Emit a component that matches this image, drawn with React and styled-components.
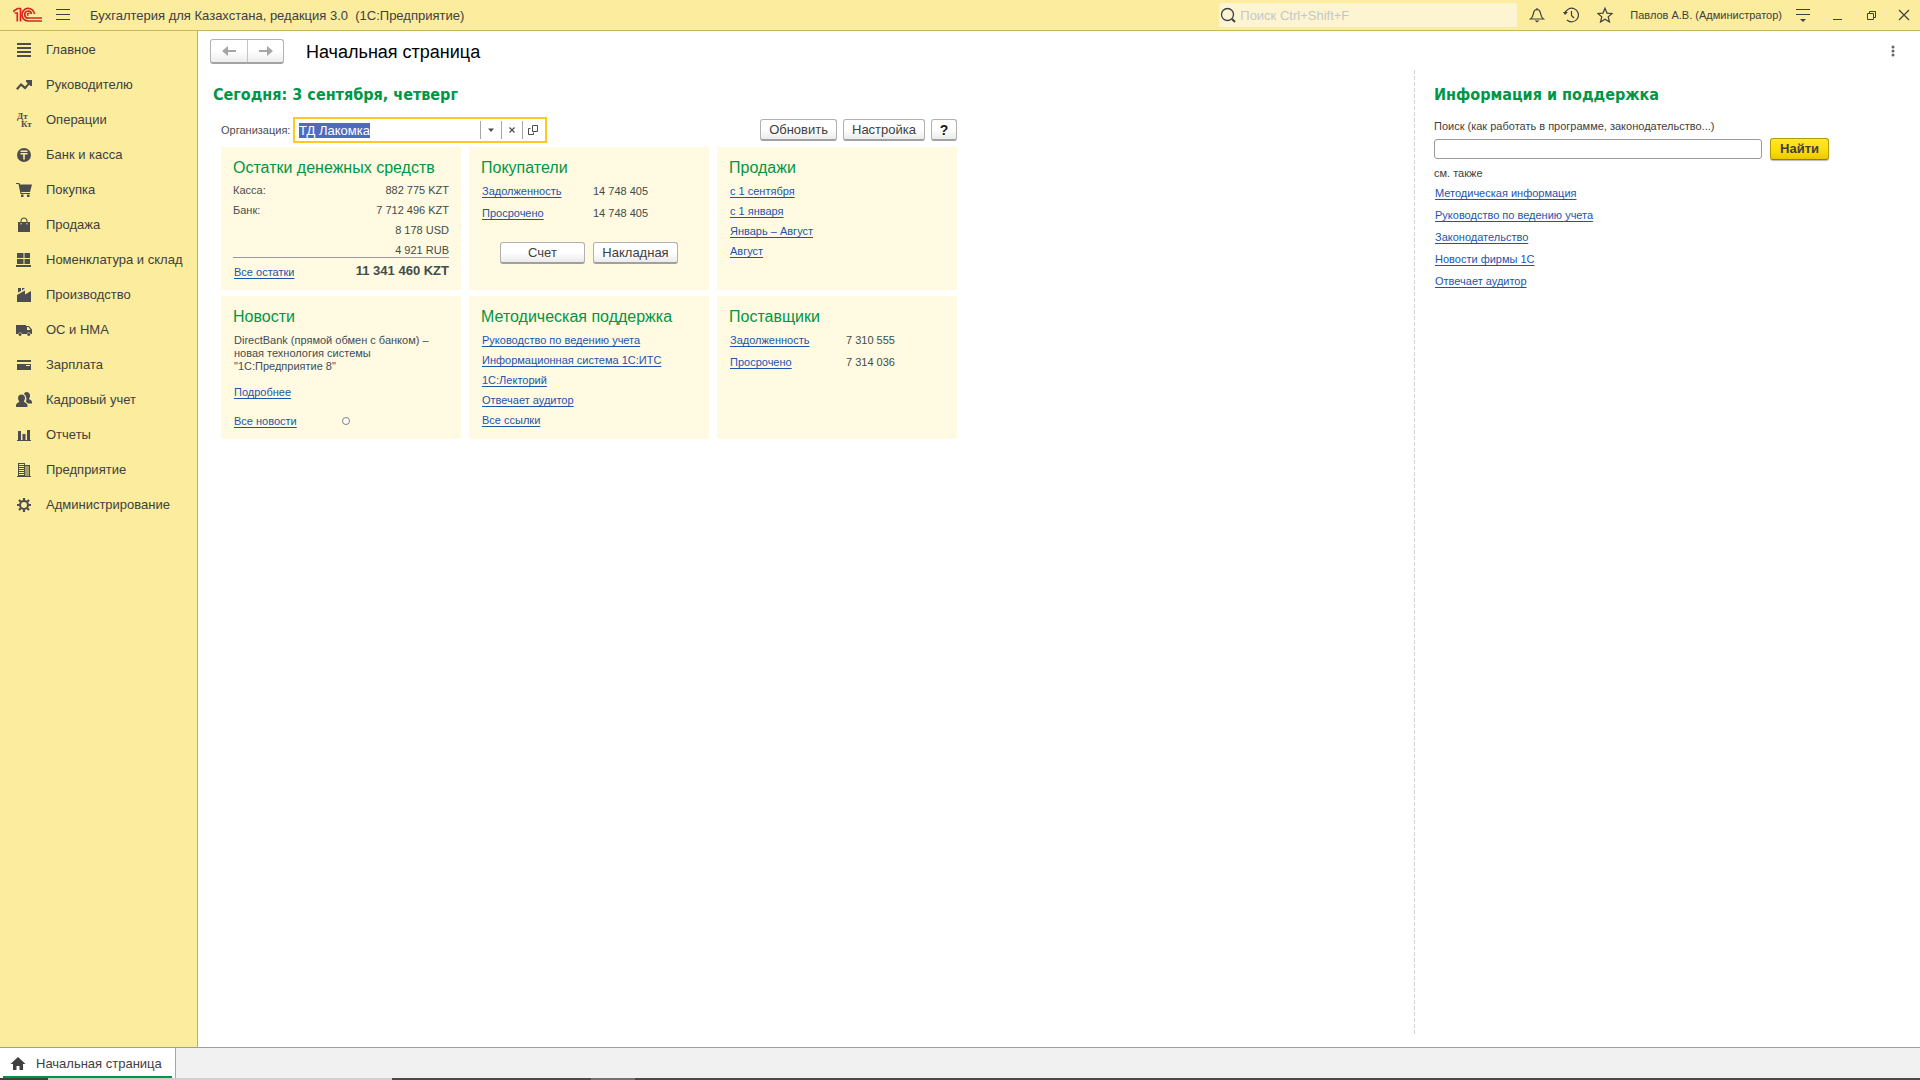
import { useEffect, useRef } from "react";
import styled, { createGlobalStyle } from "styled-components";

const GlobalStyle = createGlobalStyle`
    * { box-sizing: border-box; }
    body {
        margin: 0; background: #fff; color: #404040;
        font-family: "Liberation Sans", Arial, sans-serif; font-size: 13px;
    }
    button, input { font-family: inherit; }
`;

const Page = styled.div`
    min-height: 100vh;
    display: flex; flex-direction: column;
`;

/* верхняя панель */
const TopBar = styled.header`
    display: flex; align-items: center;
    height: 31px; padding-left: 13px;
    background: #fbec9e; border-bottom: 1px solid #c6b75f;
`;

const AppTitle = styled.span`
    flex: 1; margin-left: 7px;
    font-size: 13px; white-space: pre;
`;

const SearchBox = styled.label`
    display: flex; align-items: center; gap: 4px;
    width: 298px; height: 24px; padding-left: 1px; margin-right: 3px;
    background: #fdf5d2; border-radius: 2px;
`;

const SearchInput = styled.input`
    flex: 1; min-width: 0; padding: 0;
    border: none; outline: none; background: none; font-size: 13px;
    &::placeholder { color: #c6c6c6; opacity: 1; }
`;

const IconBtn = styled.button`
    display: flex; align-items: center; justify-content: center;
    width: ${(p) => p.$w || 34}px; height: 24px; padding: 0;
    border: none; background: none; color: #404040; cursor: pointer;
`;

const UserName = styled.span`
    margin: 0 4px 0 8px; font-size: 11px; white-space: nowrap;
`;

/* разделы */
const Body = styled.div`
    flex: 1; display: flex;
`;

const Sidebar = styled.nav`
    width: 198px; padding-top: 1px; flex-shrink: 0;
    background: #fbec9e; border-right: 1px solid #bfb061;
`;

const SideLink = styled.a`
    display: flex; align-items: center; gap: 14px;
    height: 35px; padding-left: 16px;
    color: #404040; text-decoration: none; font-size: 13px; white-space: nowrap;
    svg { color: #4d4d4d; }
    &:hover { background: #f7e27c; }
`;

const Content = styled.main`
    flex: 1; min-width: 0;
    display: flex; flex-direction: column;
`;

const PageHead = styled.div`
    display: flex; align-items: center;
    height: 39px; padding: 1px 17px 0 12px;
`;

const NavGroup = styled.div`
    display: flex; height: 25px; margin-right: 22px;
    border: 1px solid #b3b3b3; border-bottom: 2px solid #a3a3a3; border-radius: 3px;
    background: linear-gradient(#fff 50%, #ececec);
    button + button { border-left: 1px solid #c4c4c4; }
`;

const NavBtn = styled.button`
    display: flex; align-items: center; justify-content: center;
    width: 36px; padding: 0; border: none; background: none; color: #a6a6a6;
`;

const PageTitle = styled.h1`
    flex: 1; margin: 0; padding-top: 2px;
    font-size: 18px; font-weight: normal; color: #000;
`;

const Columns = styled.div`
    flex: 1; display: grid; grid-template-columns: 1fr 506px;
    padding-bottom: 12px;
`;

const Desktop = styled.section`
    padding: 15px 15px 0;
`;

const Support = styled.section`
    padding: 15px 20px 0;
    background: repeating-linear-gradient(#d4d4d4 0 4px, transparent 4px 6px) 0 0 / 1px 100% no-repeat;
`;

const Heading = styled.h2`
    margin: 0; line-height: 20px;
    font-family: "DejaVu Sans Condensed", "DejaVu Sans", sans-serif;
    font-size: 16px; font-weight: bold; color: #009646;
`;

const Board = styled.div`
    width: 736px; margin: 12px 0 0 8px;
`;

const OrgRow = styled.div`
    display: flex; align-items: center; gap: 6px; margin-bottom: 4px;
`;

const OrgLabel = styled.label`
    width: 66px; font-size: 11px; white-space: nowrap; color: #4d4d4d;
`;

const Combo = styled.div`
    display: flex; align-items: center;
    width: 254px; height: 26px; margin-right: auto; padding: 0 2px 0 4px;
    border: 2px solid #fdca1f; background: #fff;
`;

const ComboInput = styled.input`
    flex: 1; min-width: 0; padding: 0;
    border: none; outline: none; font-size: 13px;
    &::selection { background: #4f6bc0; color: #fff; }
`;

const ComboBtn = styled.button`
    display: flex; align-items: center; justify-content: center;
    width: 21px; height: 18px; padding: 0; color: #4d4d4d;
    border: none; border-left: 1px solid #a6a6a6; background: none;
`;

const Button = styled.button`
    height: 22px; padding: 0 8px; min-width: ${(p) => p.$min || 26}px;
    border: 1px solid #b0b0b0; border-bottom: 2px solid #a0a0a0; border-radius: 3px;
    background: linear-gradient(#fff 50%, #ebebeb);
    color: #404040; font-size: 13px; line-height: 18px; white-space: nowrap;
`;

const HelpBtn = styled(Button)`
    padding: 0; font-weight: bold; color: #1a1a1a; font-size: 14px;
`;

const FindBtn = styled(Button)`
    min-width: 59px;
    border-color: #b59b00; border-bottom: 1px solid #94800a;
    background: linear-gradient(#ffe733, #ffdd00 60%, #ebc800);
    box-shadow: 0 1px 1px #bbb; font-weight: bold;
`;

const Cards = styled.div`
    display: grid; grid-template-columns: repeat(3, 1fr); gap: 6px 8px;
`;

const Card = styled.article`
    min-height: 143px; padding: 11px 12px 0;
    background: #fffae1; font-size: 11px; color: #404d4d;
`;

const CardTitle = styled.h3`
    margin: 0 0 2px; line-height: 20px;
    font-size: 16px; font-weight: normal; color: #009646; white-space: nowrap;
`;

const Link = styled.a`
    color: #1c55ae; font-size: 11px; white-space: nowrap;
    text-decoration: underline; text-underline-offset: 2px;
`;

const List = styled.ul`
    margin: 0; padding: 1px 0 0 1px; list-style: none;
    li { height: ${(p) => p.$row || 20}px; line-height: 20px; }
`;

const Money = styled.table`
    width: 100%; margin-top: 5px; border-collapse: separate; border-spacing: 0;
    th, td { padding: 0; line-height: 14px; }
    th { text-align: left; font-weight: normal; color: #4d4d4d; }
    td { text-align: right; }
    tbody tr { height: 20px; vertical-align: top; }
    tbody tr:last-child { height: 14px; }
    tfoot th, tfoot td { height: 28px; border-top: 1px solid #999; }
    tfoot th { padding-left: 1px; }
    tfoot td { padding-bottom: 2px; font-weight: bold; font-size: 13px; }
`;

const Debts = styled.table`
    border-collapse: collapse;
    th, td { height: 22px; padding: 0 0 0 1px; text-align: left; font-weight: normal; }
    th { width: ${(p) => p.$name}px; }
`;

const CardActions = styled.div`
    display: flex; justify-content: center; gap: 8px; margin-top: 18px;
`;

const NewsText = styled.p`
    margin: 0; padding: 5px 0 0 1px; line-height: 13px; color: #404d5a;
`;

const NewsFoot = styled.div`
    display: flex; align-items: center; gap: 45px;
    height: 20px; margin: 9px 0 0 1px;
`;

const Dot = styled.input`
    appearance: none; width: 8px; height: 8px; margin: 0;
    border: 1px solid #808080; border-radius: 50%; background: #fff;
`;

const SupportLabel = styled.label`
    display: block; margin-top: 12px; font-size: 11px; line-height: 18px;
`;

const FindRow = styled.div`
    display: flex; align-items: center; gap: 8px; margin-top: 3px;
`;

const FindInput = styled.input`
    width: 328px; height: 20px; padding: 0 5px;
    border: 1px solid #999; border-radius: 3px; font-size: 12px;
`;

const SeeAlso = styled.p`
    margin: 4px 0 0; font-size: 11px; line-height: 18px;
`;

/* открытые окна */
const Tabs = styled.footer`
    display: flex; height: 31px;
    border-top: 1px solid #9d9d9d; background: #f1f1f1;
`;

const Tab = styled.a`
    display: flex; align-items: center; gap: 10px;
    width: 176px; padding: 0 12px 0 10px;
    border-right: 1px solid #a6a6a6; color: #404040; text-decoration: none; white-space: nowrap;
    background: linear-gradient(#009646, #009646) 3px 100% / 169px 2px no-repeat #fff;
`;

const TaskStrip = styled.div`
    display: flex; height: 2px; background: #484a4c;
`;

const TaskPart = styled.span`
    width: ${(p) => p.$w}px; background: ${(p) => p.$color};
`;

function Icon({ size = 16, children, stroke }) {
    return (
        <svg width={size} height={size} viewBox={`0 0 ${size} ${size}`} aria-hidden="true"
            fill={stroke ? "none" : "currentColor"} stroke={stroke ? "currentColor" : "none"} strokeWidth={stroke}>
            {children}
        </svg>
    );
}

const sections = [
    ["Главное", <path d="M1 1h14v2H1zM1 5h14v2H1zM1 9h14v2H1zM1 13h14v2H1z" />],
    ["Руководителю", <path d="M0 11.5 5 6l4 3.500 2.700-3L10 4.500V3h6v6h-1.500l-1.300-1.200L9.200 12.500 5 9 1.800 13z" />],
    ["Операции", (
        <g fontFamily="Liberation Serif, serif" fontSize="9" fontWeight="bold">
            <text x="1" y="7">Дт</text>
            <text x="5" y="15">Кт</text>
        </g>
    )],
    ["Банк и касса", <path fillRule="evenodd" d="M8 1a7 7 0 1 0 0 14A7 7 0 0 0 8 1zM4.500 3.500h7V5h-7zM4.500 6h7v1.500H8.800V12.500H7.200V7.500H4.500z" />],
    ["Покупка", <path d="M0 1h3.500l.5 1.500h12L14 10H5.300l.2 1H14v1H4.500L2.500 2H0zM5 12.500h2.500V15H5zM11 12.500h2.500V15H11z" />],
    ["Продажа", <path fillRule="evenodd" d="M2 5h2.500V4c0-2 1.500-3.500 3.500-3.500s3.500 1.500 3.500 3.500v1H14v10H2zM5.600 5h4.800V4c0-1.400-1-2.400-2.400-2.400S5.600 2.600 5.600 4zM4.500 6v1.500h1V6zM10.500 6v1.500h1V6z" />],
    ["Номенклатура и склад", <path d="M1 1h6.500v5H1zM8.500 1H14v5H8.500zM1 7h6.500v5H1zM8.500 7H14v5H8.500zM0 13h15v2H0z" />],
    ["Производство", <path d="M2 1h3v3L2 5.500zM6 1h3L6 3.500zM1 8l8-4.500V7.500l6-3.500v11H1z" />],
    ["ОС и НМА", <path fillRule="evenodd" d="M0 3h10v1h3l3 3.500V12h-1.300a2 2 0 0 0-3.800 0H6a2 2 0 0 0-3.800 0H0zM11 5v3h3.500L12.500 5zM4 11a1.500 1.500 0 1 0 .1 0zM12.700 11a1.500 1.500 0 1 0 .1 0z" />],
    ["Зарплата", <path fillRule="evenodd" d="M1 3h14v2H1zM1 7h14v6H1zM10 8v1h4V8z" />],
    ["Кадровый учет", <path d="M10.500 0C12.500 0 14 1.500 14 3.500 14 5 13.500 6 13 6.800c.3 1 3 1.400 3 3.200v1.500h-4c-.5-1-1.500-1.500-2.200-1.800C11 8 10.500 3.500 8 2 8.300.8 9.300 0 10.500 0zM5.500 2.500C7.500 2.500 9 4 9 6c0 1.500-.7 2.800-1.200 3.500.5 1 3.700 1.500 3.700 4V15H0v-1.500c0-2.500 3-3 3.400-4C2.700 8.800 2 7.500 2 6c0-2 1.500-3.500 3.500-3.500z" />],
    ["Отчеты", <path d="M1 13h14v1H1zM2 4h3v9H2zM6.500 7h3v6h-3zM11 3h3v10h-3z" />],
    ["Предприятие", <path fillRule="evenodd" d="M2 1h7v2h5v11h1v1H1v-1h1zM3 2v1h5V2zM3 4v1h5V4zM3 6v1h5V6zM3 8v1h5V8zM3 10v1h5v-1zM3 12v1h5v-1zM9 4.500v1h4v-1zM9 6.500v1h4v-1zM9 8.500v1h4v-1zM9 10.500v1h4v-1zM9 12.500v1h4v-1z" />],
    ["Администрирование", (
        <g fill="none" stroke="currentColor">
            <circle cx="8" cy="8" r="4" strokeWidth="2" />
            <path strokeWidth="2.200" d="M8 1v2.500M8 12.500V15M1 8h2.500M12.500 8H15M3 3l1.800 1.800M11.200 11.200 13 13M3 13l1.800-1.800M11.200 4.800 13 3" />
        </g>
    )],
];

const salesLinks = ["с 1 сентября", "с 1 января", "Январь – Август", "Август"];
const methodLinks = ["Руководство по ведению учета", "Информационная система 1С:ИТС", "1С:Лекторий", "Отвечает аудитор", "Все ссылки"];
const supportLinks = ["Методическая информация", "Руководство по ведению учета", "Законодательство", "Новости фирмы 1С", "Отвечает аудитор"];

function Logo() {
    return (
        <svg width="30" height="16" viewBox="0 0 30 16" fill="none" stroke="#d9241f" strokeWidth="1.700" role="img" aria-label="1С">
            <path d="M0 4.500 4.500 1.500H7.500V14.500M1.500 6H4.300v8.500" />
            <path d="M21.500 7A6.300 6.300 0 1 0 15.500 14H29" />
            <path d="M18.500 7A3.400 3.400 0 1 0 15.500 11H29" />
            <path d="M16.300 7.200a1 1 0 1 0-.8 1.200" strokeWidth="1.200" />
        </svg>
    );
}

function LinkList({ items, row }) {
    return (
        <List $row={row}>
            {items.map((text) => <li key={text}><Link href="#">{text}</Link></li>)}
        </List>
    );
}

function DebtTable({ rows, nameWidth }) {
    return (
        <Debts $name={nameWidth}>
            <tbody>
                {rows.map(([name, sum]) => (
                    <tr key={name}>
                        <th scope="row"><Link href="#">{name}</Link></th>
                        <td>{sum}</td>
                    </tr>
                ))}
            </tbody>
        </Debts>
    );
}

function Header() {
    return (
        <TopBar>
            <Logo />
            <IconBtn $w={40} aria-label="Меню">
                <Icon stroke="1"><path d="M1 2.500h14M1 7.500h14M1 12.500h14" /></Icon>
            </IconBtn>
            <AppTitle>{"Бухгалтерия для Казахстана, редакция 3.0  (1С:Предприятие)"}</AppTitle>
            <SearchBox>
                <Icon stroke="1.300"><circle cx="7.500" cy="7.500" r="6" /><path strokeWidth="2" d="m12 12 3 3" /></Icon>
                <SearchInput placeholder="Поиск Ctrl+Shift+F" aria-label="Поиск" />
            </SearchBox>
            <IconBtn aria-label="Уведомления">
                <Icon stroke="1.200"><path d="M1.500 12C4.500 10 4 7 5 4.500 5.500 3.300 6.500 2.700 8 2.700s2.500.6 3 1.800c1 2.500.5 5.500 3.500 7.500zM8 1v1.500" /><path d="M5.500 13.500h5L8 15.500z" fill="currentColor" stroke="none" /></Icon>
            </IconBtn>
            <IconBtn aria-label="История">
                <Icon stroke="1.200"><path d="M2 6.500A6.800 6.800 0 1 1 4 13M8.500 4v4.500L11 11" /><path d="M0 5h5L2 8z" fill="currentColor" stroke="none" /></Icon>
            </IconBtn>
            <IconBtn aria-label="Избранное">
                <Icon stroke="1.200"><path d="m8 1.200 2 4.900 5.200.4-4 3.400 1.300 5.100L8 12.200 3.500 15l1.300-5.100-4-3.400L6 6.100z" /></Icon>
            </IconBtn>
            <UserName>Павлов А.В. (Администратор)</UserName>
            <IconBtn aria-label="Сервис">
                <Icon stroke="1"><path d="M1 2.500h14M1 7.500h14" /><path d="M5 12h6l-3 3z" fill="currentColor" stroke="none" /></Icon>
            </IconBtn>
            <IconBtn aria-label="Свернуть">
                <Icon stroke="1"><path d="M4 12.500h9" /></Icon>
            </IconBtn>
            <IconBtn aria-label="Развернуть">
                <Icon stroke="1"><path d="M4.500 6.500h6v6h-6zM6.500 6.500v-2h6v6h-2" /></Icon>
            </IconBtn>
            <IconBtn $w={32} aria-label="Закрыть">
                <Icon stroke="1.200"><path d="m3 3 10 10M13 3 3 13" /></Icon>
            </IconBtn>
        </TopBar>
    );
}

function Organization() {
    const orgRef = useRef(null);

    useEffect(() => {
        orgRef.current.focus();
        orgRef.current.select();
    }, []);

    return (
        <OrgRow>
            <OrgLabel htmlFor="org">Организация:</OrgLabel>
            <Combo>
                <ComboInput id="org" ref={orgRef} defaultValue="ТД Лакомка" />
                <ComboBtn aria-label="Выбрать"><Icon><path d="M5 6.500h6L8 10z" /></Icon></ComboBtn>
                <ComboBtn aria-label="Очистить"><Icon stroke="1.200"><path d="m5.500 5.500 5 5M10.500 5.500l-5 5" /></Icon></ComboBtn>
                <ComboBtn aria-label="Открыть"><Icon stroke="1"><path d="M7.500 3.500h5v6h-5zM5.500 6.500h-2v6h5v-2" /></Icon></ComboBtn>
            </Combo>
            <Button>Обновить</Button>
            <Button>Настройка</Button>
            <HelpBtn>?</HelpBtn>
        </OrgRow>
    );
}

function App() {
    return (
        <Page>
            <GlobalStyle />
            <Header />
            <Body>
                <Sidebar>
                    {sections.map(([name, shape]) => (
                        <SideLink href="#" key={name}><Icon>{shape}</Icon>{name}</SideLink>
                    ))}
                </Sidebar>
                <Content>
                    <PageHead>
                        <NavGroup>
                            <NavBtn aria-label="Назад"><Icon><path d="M1 8l6-5v4h8v2H7v4z" /></Icon></NavBtn>
                            <NavBtn aria-label="Вперед"><Icon><path d="M15 8 9 3v4H1v2h8v4z" /></Icon></NavBtn>
                        </NavGroup>
                        <PageTitle>Начальная страница</PageTitle>
                        <IconBtn $w={20} aria-label="Еще">
                            <Icon>
                                <g fill="#666">
                                    <circle cx="8" cy="4" r="1.500" />
                                    <circle cx="8" cy="8" r="1.500" />
                                    <circle cx="8" cy="12" r="1.500" />
                                </g>
                            </Icon>
                        </IconBtn>
                    </PageHead>
                    <Columns>
                        <Desktop>
                            <Heading>Сегодня: 3 сентября, четверг</Heading>
                            <Board>
                                <Organization />
                                <Cards>
                                    <Card>
                                        <CardTitle>Остатки денежных средств</CardTitle>
                                        <Money>
                                            <tbody>
                                                <tr><th scope="row">Касса:</th><td>882 775 KZT</td></tr>
                                                <tr><th scope="row">Банк:</th><td>7 712 496 KZT</td></tr>
                                                <tr><th /><td>8 178 USD</td></tr>
                                                <tr><th /><td>4 921 RUB</td></tr>
                                            </tbody>
                                            <tfoot>
                                                <tr><th><Link href="#">Все остатки</Link></th><td>11 341 460 KZT</td></tr>
                                            </tfoot>
                                        </Money>
                                    </Card>
                                    <Card>
                                        <CardTitle>Покупатели</CardTitle>
                                        <DebtTable nameWidth={111} rows={[["Задолженность", "14 748 405"], ["Просрочено", "14 748 405"]]} />
                                        <CardActions>
                                            <Button $min={85}>Счет</Button>
                                            <Button $min={85}>Накладная</Button>
                                        </CardActions>
                                    </Card>
                                    <Card>
                                        <CardTitle>Продажи</CardTitle>
                                        <LinkList items={salesLinks} />
                                    </Card>
                                    <Card>
                                        <CardTitle>Новости</CardTitle>
                                        <NewsText>
                                            DirectBank (прямой обмен с банком) –<br />
                                            новая технология системы<br />
                                            "1С:Предприятие 8"
                                        </NewsText>
                                        <NewsFoot><Link href="#">Подробнее</Link></NewsFoot>
                                        <NewsFoot>
                                            <Link href="#">Все новости</Link>
                                            <Dot type="radio" name="news" aria-label="Новость 1" />
                                        </NewsFoot>
                                    </Card>
                                    <Card>
                                        <CardTitle>Методическая поддержка</CardTitle>
                                        <LinkList items={methodLinks} />
                                    </Card>
                                    <Card>
                                        <CardTitle>Поставщики</CardTitle>
                                        <DebtTable nameWidth={116} rows={[["Задолженность", "7 310 555"], ["Просрочено", "7 314 036"]]} />
                                    </Card>
                                </Cards>
                            </Board>
                        </Desktop>
                        <Support>
                            <Heading>Информация и поддержка</Heading>
                            <SupportLabel htmlFor="find">Поиск (как работать в программе, законодательство...)</SupportLabel>
                            <FindRow>
                                <FindInput id="find" />
                                <FindBtn>Найти</FindBtn>
                            </FindRow>
                            <SeeAlso>см. также</SeeAlso>
                            <LinkList items={supportLinks} row={22} />
                        </Support>
                    </Columns>
                </Content>
            </Body>
            <Tabs>
                <Tab href="#">
                    <Icon><path d="M8 2 0.500 9H3v6h3.500v-4h3v4H13V9h2.500z" /></Icon>
                    Начальная страница
                </Tab>
            </Tabs>
            <TaskStrip>
                <TaskPart $w={48} $color="#35453f" />
                <TaskPart $w={344} $color="#d0d0d0" />
                <TaskPart $w={199} $color="#484a4c" />
                <TaskPart $w={44} $color="#707274" />
            </TaskStrip>
        </Page>
    );
}

export default App;
